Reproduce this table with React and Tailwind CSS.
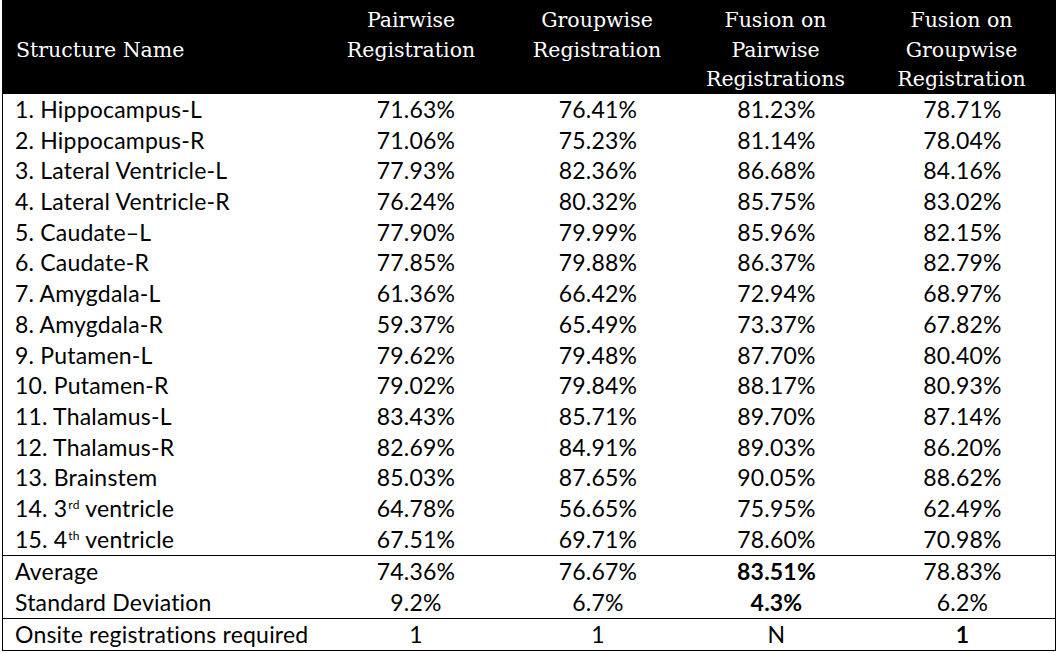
import React from "react";

const sup = "text-[12px] relative -top-[8px] align-baseline ml-[1px]";

const rows = [
  ["1. Hippocampus-L", "71.63%", "76.41%", "81.23%", "78.71%"],
  ["2. Hippocampus-R", "71.06%", "75.23%", "81.14%", "78.04%"],
  ["3. Lateral Ventricle-L", "77.93%", "82.36%", "86.68%", "84.16%"],
  ["4. Lateral Ventricle-R", "76.24%", "80.32%", "85.75%", "83.02%"],
  ["5. Caudate\u2013L", "77.90%", "79.99%", "85.96%", "82.15%"],
  ["6. Caudate-R", "77.85%", "79.88%", "86.37%", "82.79%"],
  ["7. Amygdala-L", "61.36%", "66.42%", "72.94%", "68.97%"],
  ["8. Amygdala-R", "59.37%", "65.49%", "73.37%", "67.82%"],
  ["9. Putamen-L", "79.62%", "79.48%", "87.70%", "80.40%"],
  ["10. Putamen-R", "79.02%", "79.84%", "88.17%", "80.93%"],
  ["11. Thalamus-L", "83.43%", "85.71%", "89.70%", "87.14%"],
  ["12. Thalamus-R", "82.69%", "84.91%", "89.03%", "86.20%"],
  ["13. Brainstem", "85.03%", "87.65%", "90.05%", "88.62%"],
  [<>14. 3<sup className={sup}>rd</sup> ventricle</>, "64.78%", "56.65%", "75.95%", "62.49%"],
  [<>15. 4<sup className={sup}>th</sup> ventricle</>, "67.51%", "69.71%", "78.60%", "70.98%"],
];

const cols = "grid grid-cols-[318px_190px_174px_183px_189px]";

function Row({ cells, h, bold = [] }) {
  return (
    <div className={`${cols} items-center`} style={{ height: h }}>
      {cells.map((c, i) => (
        <div
          key={i}
          className={
            i === 0
              ? "pl-[12px] whitespace-nowrap"
              : `text-center ${bold.includes(i) ? "font-bold" : ""}`
          }
        >
          {c}
        </div>
      ))}
    </div>
  );
}

function Sep() {
  return (
    <div className={`${cols} h-px bg-black`}>
      <div />
      <div />
      <div />
      <div />
      <div />
    </div>
  );
}

export default function App() {
  return (
    <div className="w-[1060px] h-[653px] bg-white overflow-hidden">
      <div className="ml-[2px] w-[1054px] text-black">
        <div
          className={`${cols} h-[94px] bg-black text-white text-[20.5px] leading-[29.5px] text-center pt-[6px]`}
          style={{ fontFamily: '"DejaVu Serif", serif' }}
        >
          <div className="text-left pl-[14px] pt-[30px]">Structure Name</div>
          <div className="pr-[8px]">Pairwise<br />Registration</div>
          <div>Groupwise<br />Registration</div>
          <div>Fusion on<br />Pairwise<br />Registrations</div>
          <div>Fusion on<br />Groupwise<br />Registration</div>
        </div>
        <div
          className="border-l border-r border-b border-black text-[23px] tracking-[0.2px] leading-none"
          style={{ fontFamily: 'Lato, sans-serif' }}
        >
          {rows.map((r, i) => (
            <Row key={i} cells={r} h={30.73} />
          ))}
          <Sep />
          <Row cells={["Average", "74.36%", "76.67%", "83.51%", "78.83%"]} h={31} bold={[3]} />
          <Row cells={["Standard Deviation", "9.2%", "6.7%", "4.3%", "6.2%"]} h={31} bold={[3]} />
          <Sep />
          <Row cells={["Onsite registrations required", "1", "1", "N", "1"]} h={31} bold={[4]} />
        </div>
      </div>
    </div>
  );
}
